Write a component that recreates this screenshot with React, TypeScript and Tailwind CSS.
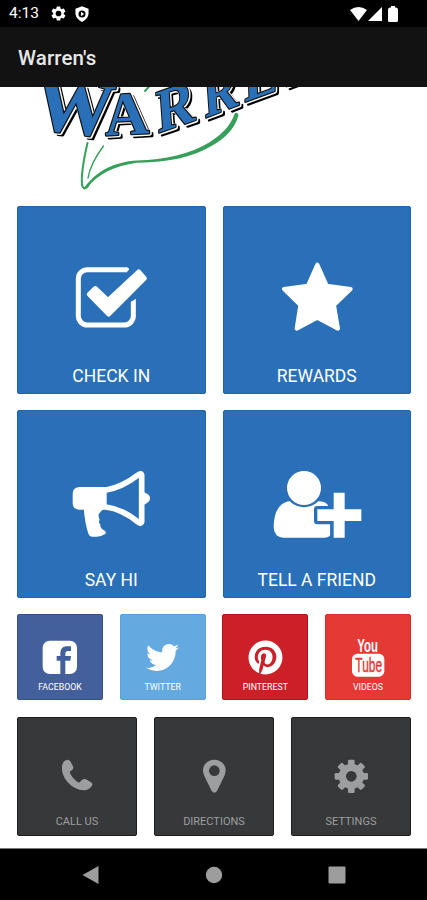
import type { ReactNode } from 'react';
import { FaTwitter, FaPinterest } from 'react-icons/fa';

const logoLetters = [
    { char: 'W', x: 32.5, y: 128, size: 79, rotate: 7, skew: 0, scale: 1 },
    { char: 'A', x: 105.5, y: 135.5, size: 61, rotate: -3, skew: 0, scale: 1 },
    { char: 'R', x: 158, y: 133, size: 61, rotate: -4, skew: -15, scale: 0.87 },
    { char: 'R', x: 205, y: 118, size: 60, rotate: -4, skew: -17, scale: 0.8 },
    { char: 'E', x: 244.5, y: 102, size: 58, rotate: -2, skew: -18, scale: 0.87 },
    { char: 'N', x: 286, y: 86.5, size: 58, rotate: -2, skew: -18, scale: 0.87 },
];

const logoLayers = [
    { dx: 3, dy: 2.5, fill: '#000', stroke: '#000', width: 3 },
    { dx: 0.8, dy: 0.6, fill: '#fff', stroke: '#fff', width: 4 },
    { dx: 0, dy: 0, fill: '#111', stroke: '#111', width: 2.4 },
    { dx: 0, dy: 0, fill: '#2a70b8', stroke: 'none', width: 0 },
];

function Logo() {
    return (
        <svg viewBox="0 87 427 119" className="block h-[119px] w-full shrink-0" fontFamily="'Liberation Serif', serif" fontWeight="bold">
            {logoLayers.map((layer, i) => (
                <g key={i} fill={layer.fill} stroke={layer.stroke} strokeWidth={layer.width} strokeLinejoin="round">
                    {logoLetters.map((l, j) => (
                        <text
                            key={j}
                            fontSize={l.size}
                            transform={`translate(${l.x + layer.dx} ${l.y + layer.dy}) rotate(${l.rotate}) skewY(${l.skew}) scale(${l.scale} 1)`}
                        >
                            {l.char}
                        </text>
                    ))}
                </g>
            ))}
            <g fill="none" stroke="#36a05b" strokeLinecap="round">
                <path d="M145 91 L149 86.500" strokeWidth="2" />
                <path d="M87.500 143 C84 158 81 174 82 185 Q84 192 89 184.500" strokeWidth="2" />
                <path d="M103.500 146 C96 156 90 166 88 178" strokeWidth="1.400" />
            </g>
            <path
                d="M84 188 C97 170 115 162 137 160.500 C165 160 190 154 210 142 C224 133 231 124 234.500 114 Q237 111 238.500 115 C235 130 222 141 206 149 C182 161 158 162 137 162.800 C114 166 98 174 87 188 Z"
                fill="#36a05b"
            />
        </svg>
    );
}

function CheckIcon() {
    return (
        <svg viewBox="138 183 330 240" className="h-20 w-[110px]">
            <path d="M351 209H232a27 27 0 0 0-27 27V348a27 27 0 0 0 27 27H343a27 27 0 0 0 27-27V305" fill="none" stroke="#fff" strokeWidth="15" />
            <path d="M350 201.500Q358 203 357 209L350 216.500zM362.500 306L377.500 296V306z" fill="#fff" />
            <path d="M238 283L256 266L294 302L386 216L403 235L296 342Z" fill="#fff" stroke="#fff" strokeWidth="15" strokeLinejoin="round" />
        </svg>
    );
}

function StarIcon() {
    return (
        <svg viewBox="140 183 330 240" className="h-20 w-[110px]">
            <path
                d="M306 194L334 257L406 267L356 315L368 386L306 353L244 386L255 315L206 267L278 257Z"
                fill="#fff"
                stroke="#fff"
                strokeWidth="12"
                strokeLinejoin="round"
            />
        </svg>
    );
}

function MegaphoneIcon() {
    return (
        <svg viewBox="138 180 330 240" className="h-20 w-[110px]" fill="#fff">
            <path d="M207 246H290V314H207Q188 312 188 294V266Q188 248 207 246Z" />
            <path d="M288 255Q336 247 384 210Q394 202 395 211V350Q393 358 384 351Q336 312 288 306" fill="none" stroke="#fff" strokeWidth="17" strokeLinejoin="round" />
            <path d="M402 262Q420 268 420 280Q420 292 402 299Z" />
            <path d="M221 308H285Q272 318 266 328Q265 337 269 344Q264 353 271 358Q270 368 276 372L285 378Q291 384 284 388Q274 395 261 395H246Q238 394 235 386Q224 352 221 308Z" />
        </svg>
    );
}

function AddFriendIcon() {
    return (
        <svg viewBox="140 180 330 240" className="h-20 w-[110px]" fill="#fff">
            <path d="M219 289H312Q335 289 341 308L345 355V390Q340 398 326 398H205Q175 396 175 365Q176 300 219 289Z" />
            <circle cx="266" cy="249" r="58" fill="#2a70b8" />
            <circle cx="266" cy="249" r="51" />
            <path d="M355 263H388V313H438V348H388V398H355V348H306V313H355Z" stroke="#2a70b8" strokeWidth="20" strokeLinejoin="round" paintOrder="stroke" />
        </svg>
    );
}

function FacebookIcon() {
    return (
        <svg viewBox="90 87 120 120" className="size-10">
            <rect x="98" y="98" width="103" height="100" rx="21" fill="#fff" />
            <path d="M151 198V158H140V144H151V136Q151 116 169 115H183V129H174Q166 129 166 138V144H183L181 158H166V198Z" fill="#43609c" />
        </svg>
    );
}

function YoutubeIcon() {
    return (
        <svg viewBox="399 89 120 120" className="size-10 overflow-visible" fontFamily="'Liberation Sans', sans-serif" fontWeight="bold">
            <text x="427" y="134" fontSize="57" textLength="62" lengthAdjust="spacingAndGlyphs" fill="#fff">You</text>
            <rect x="411" y="139" width="97" height="69" rx="16" fill="#fff" />
            <text x="421" y="195" fontSize="59" fontWeight="normal" stroke="#e53935" strokeWidth="1.5" textLength="80" lengthAdjust="spacingAndGlyphs" fill="#e53935">Tube</text>
        </svg>
    );
}

function PhoneIcon() {
    return (
        <svg viewBox="171 138 120 120" className="size-10">
            <path
                d="M197 151Q206 146 211 154L219 169Q222 176 215 181L209 186Q216 207 237 218L246 210Q251 205 258 208L273 217Q280 222 275 229Q266 241 252 241Q224 240 203 217Q184 195 186 169Q187 156 197 151Z"
                fill="#9d9e9f"
            />
        </svg>
    );
}

function PinIcon() {
    return (
        <svg viewBox="582 138 120 120" className="size-10">
            <path
                fillRule="evenodd"
                d="M643 149C662 149 677 163 677 181Q677 189 673 198L651 243Q643 254 635 243L613 198Q609 189 609 181C609 163 624 149 643 149ZM643 166A16 16 0 1 0 643 198A16 16 0 1 0 643 166Z"
                fill="#9d9e9f"
            />
        </svg>
    );
}

function GearIcon() {
    return (
        <svg viewBox="354 138 120 120" className="size-10" fill="#9d9e9f">
            {[0, 45, 90, 135].map((angle) => (
                <rect key={angle} x="405" y="149" width="20" height="100" rx="4" transform={`rotate(${angle} 415 199)`} />
            ))}
            <circle cx="415" cy="199" r="38" />
            <circle cx="415" cy="199" r="16" fill="#37383a" />
        </svg>
    );
}

interface TileProps {
    label: string;
    icon: ReactNode;
}

function LargeTile({ label, icon }: TileProps) {
    return (
        <button className="flex h-[188px] flex-col items-center rounded-[2px] border border-[#2064aa] bg-[#2a70b8] pt-[54px] text-white">
            {icon}
            <span className="mt-[23px] text-[17.500px] leading-6">{label}</span>
        </button>
    );
}

function SocialTile({ label, icon, className }: TileProps & { className: string }) {
    return (
        <button className={`flex h-[86px] flex-col items-center rounded-[2px] border pt-[22px] text-white ${className}`}>
            <span className="flex size-10 items-center justify-center">{icon}</span>
            <span className="mt-[4px] text-[8.800px] leading-3">{label}</span>
        </button>
    );
}

function DarkTile({ label, icon }: TileProps) {
    return (
        <button className="flex h-[119px] flex-col items-center rounded-[2px] border border-[#1c1d1e] bg-[#37383a] pt-[38px] text-[#9d9e9f]">
            {icon}
            <span className="mt-[18px] text-[11px] leading-4">{label}</span>
        </button>
    );
}

function StatusBar() {
    return (
        <div className="flex h-[27px] shrink-0 items-center bg-black pl-[9px] pr-[28px] text-white">
            <span className="w-[31px] pt-px text-[15.500px] leading-none">4:13</span>
            <svg viewBox="0 0 24 24" className="ml-[10px] size-[17px]" fill="currentColor">
                <path d="M19.430 12.980c.04-.32.07-.64.07-.98s-.03-.66-.07-.98l2.110-1.650c.19-.15.24-.42.12-.64l-2-3.460c-.12-.22-.39-.3-.61-.22l-2.490 1c-.52-.4-1.080-.73-1.690-.98l-.38-2.650A.49.49 0 0 0 14 2h-4c-.25 0-.46.18-.49.42l-.38 2.650c-.61.25-1.170.59-1.690.98l-2.490-1c-.23-.09-.49 0-.61.22l-2 3.460c-.13.22-.07.49.12.64l2.110 1.650c-.04.32-.07.65-.07.98s.03.66.07.98l-2.110 1.650c-.19.15-.24.42-.12.64l2 3.460c.12.22.39.3.61.22l2.490-1c.52.4 1.080.73 1.690.98l.38 2.650c.03.24.24.42.49.42h4c.25 0 .46-.18.49-.42l.38-2.650c.61-.25 1.170-.59 1.690-.98l2.490 1c.23.09.49 0 .61-.22l2-3.460c.12-.22.07-.49-.12-.64zM12 16a4 4 0 1 1 0-8 4 4 0 0 1 0 8z" />
            </svg>
            <svg viewBox="0 0 16 18" className="ml-[8px] h-[16px] w-[14px]" fill="currentColor">
                <path d="M8 0L15.500 3V8.500Q15 15 8 18Q1 15 .5 8.500V3Z" />
                <circle cx="8" cy="9" r="4" fill="#000" />
                <path d="M6.800 6.500L10.500 9L6.800 11.500Z" />
            </svg>
            <div className="ml-auto flex items-center">
                <svg viewBox="0 0 17 14" className="h-[14px] w-[17px]" fill="currentColor">
                    <path d="M0 3Q8.500-3 17 3L8.500 14Z" />
                </svg>
                <svg viewBox="0 0 14 14" className="ml-px h-[14px] w-[14px]" fill="currentColor">
                    <path d="M14 0V14H0Z" />
                </svg>
                <svg viewBox="0 0 10 16" className="ml-[6px] mr-px h-[16px] w-[10px]" fill="currentColor">
                    <path d="M3 0H7V1.500H8Q10 2 10 3.500V14.500Q10 16 8.500 16H1.500Q0 16 0 14.500V3.500Q0 2 2 1.500H3Z" />
                </svg>
            </div>
        </div>
    );
}

export default function App() {
    return (
        <div className="flex h-[900px] w-[427px] flex-col overflow-hidden bg-white font-['Roboto',sans-serif]">
            <StatusBar />
            <header className="flex h-[60px] shrink-0 items-center bg-[#121212] pl-[18px]">
                <h1 className="pt-[2px] text-[20.500px] font-medium leading-none tracking-[0.1px] text-[#e8e8e8]">Warren's</h1>
            </header>

            <main className="flex flex-1 flex-col">
                <Logo />
                <div className="flex flex-col gap-4 pl-[17px] pr-4">
                    <div className="grid grid-cols-2 gap-x-[17px] gap-y-4">
                        <LargeTile label="CHECK IN" icon={<CheckIcon />} />
                        <LargeTile label="REWARDS" icon={<StarIcon />} />
                        <LargeTile label="SAY HI" icon={<MegaphoneIcon />} />
                        <LargeTile label="TELL A FRIEND" icon={<AddFriendIcon />} />
                    </div>
                    <div className="grid grid-cols-4 gap-x-[16.500px]">
                        <SocialTile label="FACEBOOK" icon={<FacebookIcon />} className="border-[#34528f] bg-[#43609c]" />
                        <SocialTile label="TWITTER" icon={<FaTwitter size={33} />} className="border-[#59a0dc] bg-[#64a9e0]" />
                        <SocialTile label="PINTEREST" icon={<FaPinterest size={35} />} className="border-[#bd1018] bg-[#cb2027]" />
                        <SocialTile label="VIDEOS" icon={<YoutubeIcon />} className="border-[#dc2b29] bg-[#e53935]" />
                    </div>
                    <div className="grid grid-cols-3 gap-x-[17px] pt-px">
                        <DarkTile label="CALL US" icon={<PhoneIcon />} />
                        <DarkTile label="DIRECTIONS" icon={<PinIcon />} />
                        <DarkTile label="SETTINGS" icon={<GearIcon />} />
                    </div>
                </div>
            </main>

            <nav className="flex h-[52px] shrink-0 items-center justify-center gap-[105px] border-t border-[#777] bg-black text-[#9d9d9d]">
                <svg viewBox="0 0 18 18" className="size-[18px]" fill="currentColor">
                    <path d="M16.500 0V18L.5 9Z" />
                </svg>
                <svg viewBox="0 0 18 18" className="size-[18px]" fill="currentColor">
                    <circle cx="9" cy="9" r="8.200" />
                </svg>
                <svg viewBox="0 0 18 18" className="size-[18px]" fill="currentColor">
                    <rect x=".5" y=".5" width="17" height="17" rx="1" />
                </svg>
            </nav>
        </div>
    );
}
